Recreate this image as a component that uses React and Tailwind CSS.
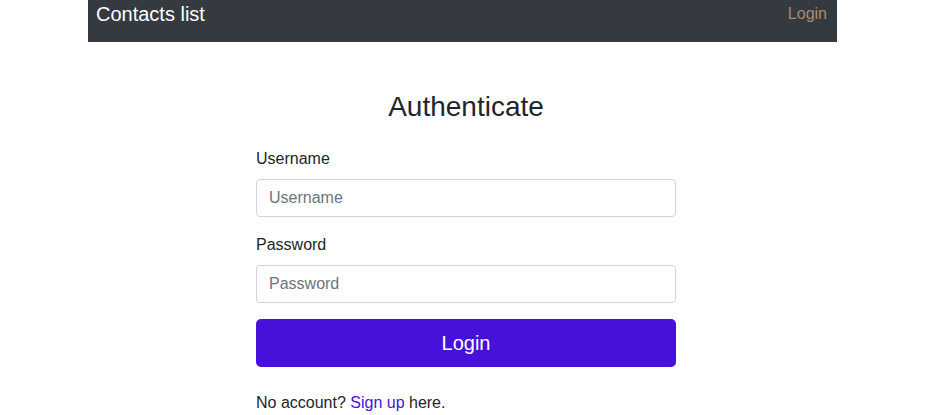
export default function App() {
  return (
    <div className="min-h-screen bg-white text-[#212529] font-['Liberation_Sans',Arial,sans-serif]">
      <div className="w-[749px] ml-[88px] h-[42px] bg-[#343a40] flex items-start justify-between px-2">
        <span className="text-white text-[20px] leading-[28px]">Contacts list</span>
        <a href="#" className="text-[#ab8a70] text-[16px] leading-[28px] mr-[2px]">Login</a>
      </div>

      <div className="w-[420px] ml-[256px] pt-[48px]">
        <h1 className="text-center text-[28px] leading-[34px] text-[#212529] mb-[23px]">Authenticate</h1>
        <form className="flex flex-col">
          <label className="text-[16px] leading-[24px] mb-[8px]">Username</label>
          <input
            placeholder="Username"
            className="h-[38px] px-3 border border-[#ced4da] rounded-[4px] text-[16px] placeholder:text-[#6c757d] mb-[16px]"
          />
          <label className="text-[16px] leading-[24px] mb-[8px]">Password</label>
          <input
            type="password"
            placeholder="Password"
            className="h-[38px] px-3 border border-[#ced4da] rounded-[4px] text-[16px] placeholder:text-[#6c757d] mb-[16px]"
          />
          <button type="button" className="h-[48px] bg-[#4710db] text-white text-[20px] rounded-[5px]">Login</button>
        </form>
        <p className="mt-[24px] text-[16px] leading-[24px]">
          No account? <a href="#" className="text-[#4710db]">Sign up</a> here.
        </p>
      </div>
    </div>
  )
}
